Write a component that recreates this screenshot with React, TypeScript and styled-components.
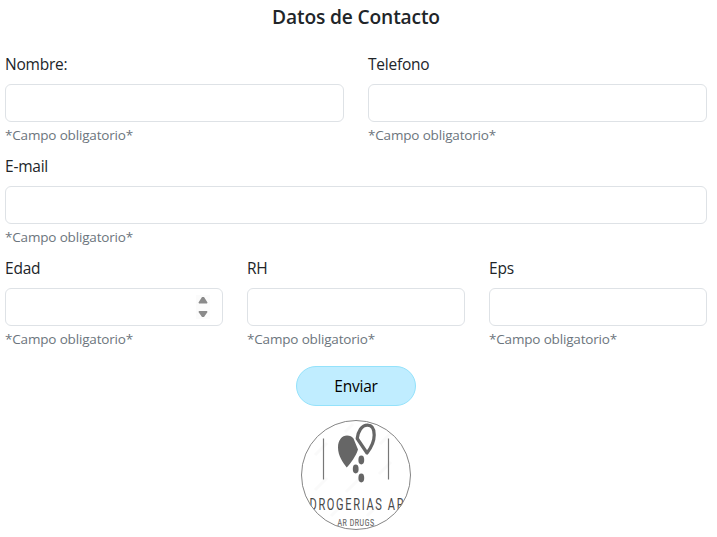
import React from "react";
import styled, { createGlobalStyle } from "styled-components";

const GlobalStyle = createGlobalStyle`
  *, *::before, *::after { box-sizing: border-box; }
  body {
    margin: 0;
    background: #fff;
    color: #212529;
    font: 400 16px/24px "Segoe UI", "Open Sans", "Noto Sans", sans-serif;
  }
`;

const Form = styled.form`
  display: flex;
  flex-direction: column;
  align-items: center;
  width: 702px;
  margin: 0 5px;
  padding-top: 5px;
`;

const Title = styled.h5`
  margin: 0 0 23px;
  font-size: 19.2px;
  line-height: 24px;
  font-weight: 600;
  letter-spacing: -0.15px;
`;

const Row = styled.div<{ $columns: number }>`
  display: grid;
  grid-template-columns: repeat(${(p) => p.$columns}, minmax(0, 1fr));
  column-gap: 24px;
  width: 100%;
  margin-bottom: 8px;
`;

const Field = styled.div`
  display: flex;
  flex-direction: column;
`;

const Label = styled.label`
  height: 32px;
  font-size: 15.5px;
  letter-spacing: -0.23px;
`;

const Control = styled.div`
  display: flex;
  align-items: center;
  height: 38px;
  padding-right: 12px;
  border: 1px solid #dee2e6;
  border-radius: 6px;
  background: #fff;
`;

const Input = styled.input`
  flex: 1;
  min-width: 0;
  height: 100%;
  padding: 6px 12px;
  border: 0;
  outline: 0;
  background: transparent;
  font: inherit;
`;

const Spinner = styled.svg`
  width: 14px;
  height: 24px;
  background: #fbfbfb;
  fill: #8a8a8a;
`;

const Help = styled.span`
  height: 24px;
  padding-top: 1px;
  color: #6c757d;
  font-size: 13.5px;
  line-height: 24px;
  letter-spacing: -0.17px;
`;

const Submit = styled.button`
  width: 120px;
  height: 40px;
  margin: 8px 0 14px;
  padding: 0;
  border: 1px solid #94e2fb;
  border-radius: 20px;
  background: #c0edff;
  color: #000;
  font: inherit;
  font-size: 15.5px;
  letter-spacing: -0.2px;
`;

const Logo = styled.svg`
  display: block;
  width: 110px;
  height: 110px;
  font-family: Roboto, sans-serif;
`;

function FormField({ id, label, spinner }: { id: string; label: string; spinner?: boolean }) {
  return (
    <Field>
      <Label htmlFor={id}>{label}</Label>
      <Control>
        <Input id={id} />
        {spinner && (
          <Spinner viewBox="0 0 14 24">
            <path d="M6 2H8L11.500 7.500 11 8.500H3L2.500 7.500ZM3 16h8l.5 1L8 22H6L2.500 17z" />
          </Spinner>
        )}
      </Control>
      <Help>*Campo obligatorio*</Help>
    </Field>
  );
}

function DrugstoreLogo() {
  return (
    <Logo viewBox="0 0 110 110">
      <defs>
        <clipPath id="badge"><circle cx="55" cy="55" r="54.5" /></clipPath>
      </defs>
      <g clipPath="url(#badge)">
        <path d="M14 35 26 23M44 12 52 4M79 24 91 12M14 70 26 58M45 72 58 59M78 54 90 42M30 96 42 84M66 96 78 84" stroke="#fafafa" strokeWidth="3" />
        <path d="M22.500 18.500V59.500M87.500 18.500V59.500" stroke="#777" strokeWidth="1.2" />
        <path d="M45.700 47.500C42 42.500 37 36 37 27.500C37 20 41 15.500 46 15.500C49 15.500 51 16.500 52.500 18.500L57 29.500C55 36 50 43 45.700 47.500Z" fill="#666" />
        <path d="M66 33 56.200 18.500C57 11.500 60.500 5.200 66.500 5.200C70.500 5.200 73.200 8.500 73.200 15C73.200 22.500 69.500 28.500 66 33Z" fill="#fff" stroke="#666" strokeWidth="3.2" strokeLinejoin="round" />
        <g fill="#666">
          <ellipse cx="60.300" cy="40" rx="2.900" ry="4.400" />
          <ellipse cx="54.700" cy="49" rx="2.900" ry="4.400" />
          <ellipse cx="60.300" cy="58" rx="2.900" ry="4.400" />
        </g>
        <text transform="translate(8.500 89.500) scale(.7 1)" fontSize="15.800" letterSpacing="2.350" fill="#484848">DROGERIAS AR</text>
        <text transform="translate(36.500 105.500) scale(.7 1)" fontSize="9.900" letterSpacing=".8" fill="#666" stroke="#666" strokeWidth=".15">AR DRUGS</text>
      </g>
      <circle cx="55" cy="55" r="54.500" fill="none" stroke="#777" strokeWidth=".9" />
    </Logo>
  );
}

export default function App() {
  return (
    <>
      <GlobalStyle />
      <Form onSubmit={(e) => e.preventDefault()}>
        <Title>Datos de Contacto</Title>
        <Row $columns={2}>
          <FormField id="nombre" label="Nombre:" />
          <FormField id="telefono" label="Telefono" />
        </Row>
        <Row $columns={1}>
          <FormField id="email" label="E-mail" />
        </Row>
        <Row $columns={3}>
          <FormField id="edad" label="Edad" spinner />
          <FormField id="rh" label="RH" />
          <FormField id="eps" label="Eps" />
        </Row>
        <Submit type="submit">Enviar</Submit>
        <DrugstoreLogo />
      </Form>
    </>
  );
}
